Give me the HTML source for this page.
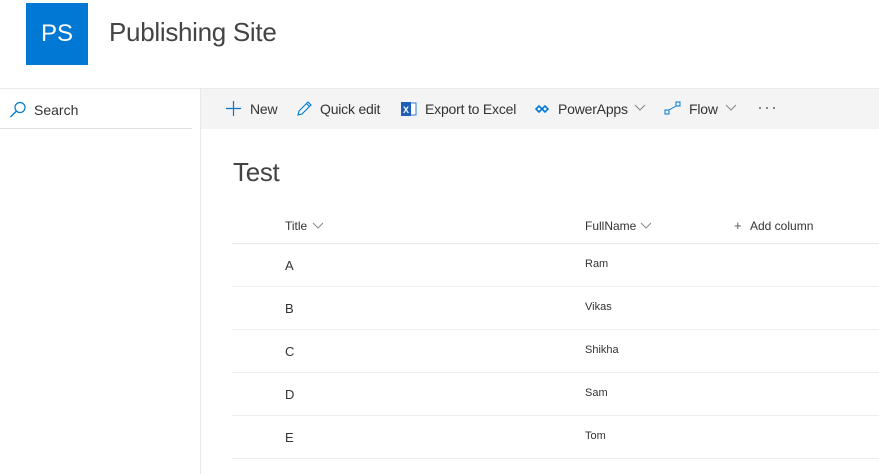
<!DOCTYPE html>
<html><head><style>
body{margin:0;width:879px;height:474px;overflow:hidden;background:#fff;font-family:"Liberation Sans",sans-serif;color:#333;position:relative}
.abs{position:absolute}
.t{position:absolute;white-space:nowrap}
.cb{letter-spacing:-0.2px}
</style></head><body>
<div class="abs" style="left:26px;top:3px;width:62px;height:62px;background:#0078d4"></div>
<div class="t" style="left:26px;top:20px;width:62px;text-align:center;color:#fff;font-size:24px">PS</div>
<div class="t" style="left:109px;top:17px;font-size:26px;color:#444;letter-spacing:-0.3px">Publishing Site</div>
<div class="abs" style="left:0;top:88px;width:879px;height:1px;background:#eaeaea"></div>
<div class="abs" style="left:200px;top:89px;width:679px;height:40px;background:#f4f4f4"></div>
<div class="abs" style="left:200px;top:89px;width:1px;height:385px;background:#e8e8e8"></div>
<div class="abs" style="left:0;top:128px;width:192px;height:1px;background:#e0e0e0"></div>
<svg class="abs" style="left:9px;top:101px" width="18" height="18" viewBox="0 0 18 18"><circle cx="11" cy="6.5" r="5" fill="none" stroke="#0078d4" stroke-width="1.2"/><path d="M7.5 10 L1.5 16" stroke="#0078d4" stroke-width="1.3"/></svg>
<div class="t" style="left:34px;top:102px;font-size:14px">Search</div>
<svg class="abs" style="left:225px;top:100px" width="17" height="17"><path d="M8.5 1V16M1 8.5H16" stroke="#0078d4" stroke-width="1.2"/></svg>
<div class="t cb" style="left:250px;top:101px;font-size:14px">New</div>
<svg class="abs" style="left:296px;top:100px" width="17" height="17"><path d="M2 15 L3 11 L12 2 L15 5 L6 14 Z M10.5 3.5 L13.5 6.5" fill="none" stroke="#0078d4" stroke-width="1.1"/></svg>
<div class="t cb" style="left:320px;top:101px;font-size:14px">Quick edit</div>
<svg class="abs" style="left:401px;top:101px" width="16" height="16"><rect x="6" y="2" width="9" height="12" fill="#fff" stroke="#2b7cd3"/><rect x="0" y="1" width="10" height="14" fill="#1f5fb5"/><text x="2" y="12" font-size="9" fill="#fff" font-family="Liberation Sans" font-weight="bold">X</text></svg>
<div class="t cb" style="left:425px;top:101px;font-size:14px">Export to Excel</div>
<svg class="abs" style="left:535px;top:103px" width="14" height="12"><path d="M1 6 L4 3 L7 6 L4 9Z M7 6 L10 3 L13 6 L10 9Z" fill="none" stroke="#0078d4" stroke-width="1.6"/></svg>
<div class="t cb" style="left:558px;top:101px;font-size:14px">PowerApps</div>
<svg class="abs" style="left:634px;top:104px" width="12" height="8"><path d="M1 1L6 6L11 1" fill="none" stroke="#888"/></svg>
<svg class="abs" style="left:664px;top:101px" width="18" height="15"><rect x="1" y="9" width="4" height="4" fill="none" stroke="#0078d4"/><rect x="12" y="1" width="4" height="4" fill="none" stroke="#0078d4"/><path d="M5 9 L12 5" stroke="#0078d4"/></svg>
<div class="t cb" style="left:689px;top:101px;font-size:14px">Flow</div>
<svg class="abs" style="left:725px;top:104px" width="12" height="8"><path d="M1 1L6 6L11 1" fill="none" stroke="#888"/></svg>
<svg class="abs" style="left:758px;top:106px" width="18" height="4"><circle cx="2" cy="2" r="1" fill="#666"/><circle cx="9" cy="2" r="1" fill="#666"/><circle cx="16" cy="2" r="1" fill="#666"/></svg>
<div class="t" style="left:233px;top:157px;font-size:26px;color:#444;letter-spacing:-0.3px">Test</div>
<div class="t" style="left:285px;top:219px;font-size:12px">Title</div>
<svg class="abs" style="left:312px;top:222px" width="12" height="8"><path d="M1 1L6 6L11 1" fill="none" stroke="#888"/></svg>
<div class="t" style="left:585px;top:219px;font-size:12px">FullName</div>
<svg class="abs" style="left:640px;top:222px" width="12" height="8"><path d="M1 1L6 6L11 1" fill="none" stroke="#888"/></svg>
<div class="t" style="left:734px;top:218px;font-size:13px;color:#555">+</div>
<div class="t" style="left:750px;top:219px;font-size:12px">Add column</div>
<div class="abs" style="left:232px;top:243px;width:647px;height:1px;background:#e8e8e8"></div>
<div class="t" style="left:285px;top:258px;font-size:13px">A</div><div class="t" style="left:585px;top:258px;font-size:11px">Ram</div>
<div class="abs" style="left:232px;top:286px;width:647px;height:1px;background:#eee"></div>
<div class="t" style="left:285px;top:301px;font-size:13px">B</div><div class="t" style="left:585px;top:301px;font-size:11px">Vikas</div>
<div class="abs" style="left:232px;top:329px;width:647px;height:1px;background:#eee"></div>
<div class="t" style="left:285px;top:344px;font-size:13px">C</div><div class="t" style="left:585px;top:344px;font-size:11px">Shikha</div>
<div class="abs" style="left:232px;top:372px;width:647px;height:1px;background:#eee"></div>
<div class="t" style="left:285px;top:387px;font-size:13px">D</div><div class="t" style="left:585px;top:387px;font-size:11px">Sam</div>
<div class="abs" style="left:232px;top:415px;width:647px;height:1px;background:#eee"></div>
<div class="t" style="left:285px;top:430px;font-size:13px">E</div><div class="t" style="left:585px;top:430px;font-size:11px">Tom</div>
<div class="abs" style="left:232px;top:458px;width:647px;height:1px;background:#eee"></div>
</body></html>
